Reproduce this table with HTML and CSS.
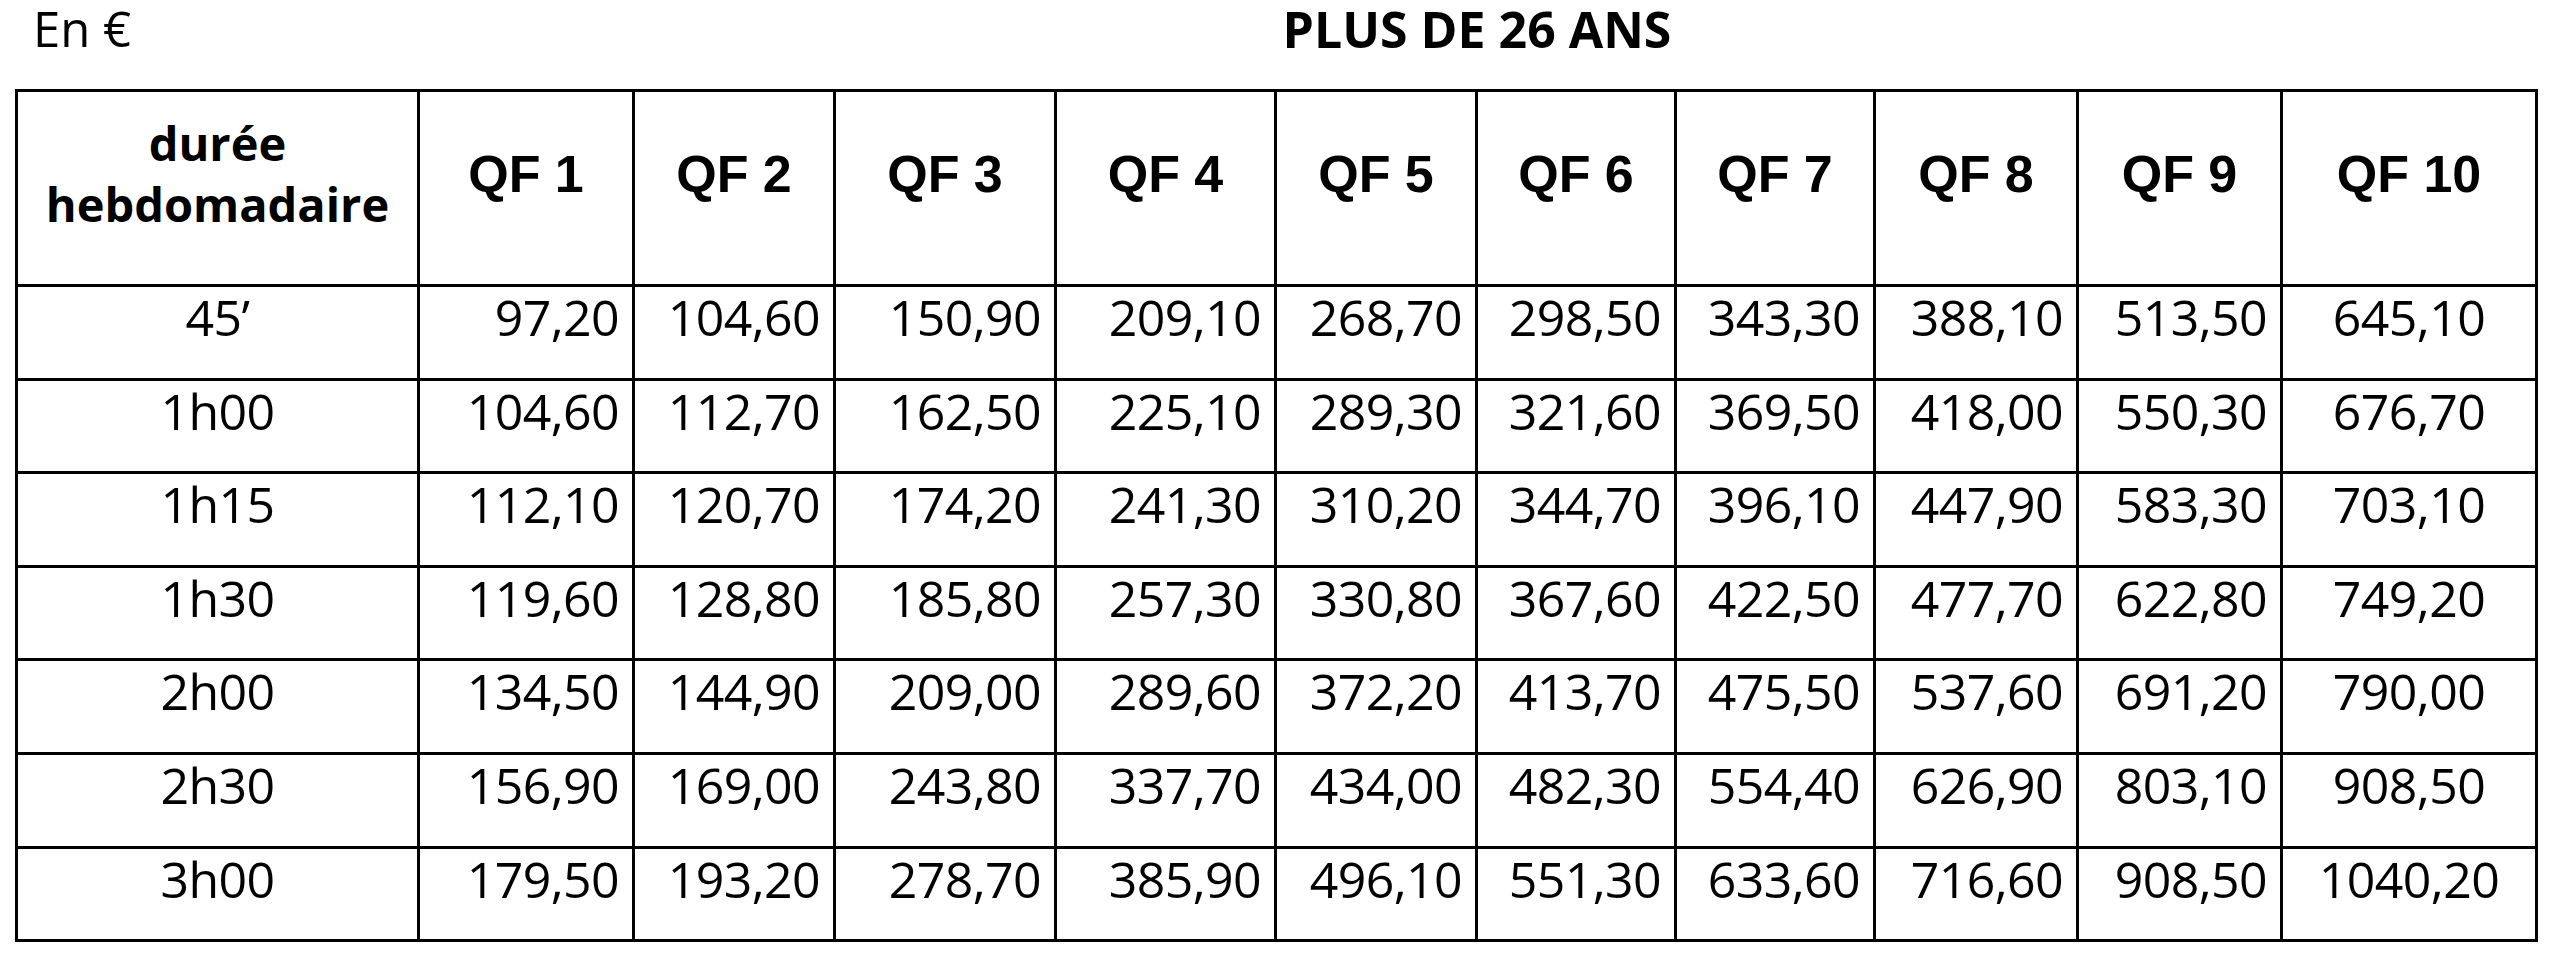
FILE: index.html
```html
<!DOCTYPE html>
<html lang="fr">
<head>
<meta charset="utf-8">
<title>Tarifs - Plus de 26 ans</title>
<link rel="stylesheet" href="styles.css">
</head>
<body>
<div class="top">
  <div class="unit">En €</div>
  <div class="title">PLUS DE 26 ANS</div>
</div>
<table class="tarifs">
  <colgroup>
    <col class="c0"><col class="c1"><col class="c2"><col class="c3"><col class="c4"><col class="c5"><col class="c6"><col class="c7"><col class="c8"><col class="c9"><col class="c10">
  </colgroup>
  <thead>
    <tr class="head">
      <th class="dur">durée<br>hebdomadaire</th>
      <th class="qf">QF 1</th><th class="qf">QF 2</th><th class="qf">QF 3</th><th class="qf">QF 4</th><th class="qf">QF 5</th><th class="qf">QF 6</th><th class="qf">QF 7</th><th class="qf">QF 8</th><th class="qf">QF 9</th><th class="qf">QF 10</th>
    </tr>
  </thead>
  <tbody>
    <tr><td class="d">45’</td><td>97,20</td><td>104,60</td><td>150,90</td><td>209,10</td><td>268,70</td><td>298,50</td><td>343,30</td><td>388,10</td><td>513,50</td><td class="last">645,10</td></tr>
    <tr><td class="d">1h00</td><td>104,60</td><td>112,70</td><td>162,50</td><td>225,10</td><td>289,30</td><td>321,60</td><td>369,50</td><td>418,00</td><td>550,30</td><td class="last">676,70</td></tr>
    <tr><td class="d">1h15</td><td>112,10</td><td>120,70</td><td>174,20</td><td>241,30</td><td>310,20</td><td>344,70</td><td>396,10</td><td>447,90</td><td>583,30</td><td class="last">703,10</td></tr>
    <tr><td class="d">1h30</td><td>119,60</td><td>128,80</td><td>185,80</td><td>257,30</td><td>330,80</td><td>367,60</td><td>422,50</td><td>477,70</td><td>622,80</td><td class="last">749,20</td></tr>
    <tr><td class="d">2h00</td><td>134,50</td><td>144,90</td><td>209,00</td><td>289,60</td><td>372,20</td><td>413,70</td><td>475,50</td><td>537,60</td><td>691,20</td><td class="last">790,00</td></tr>
    <tr><td class="d">2h30</td><td>156,90</td><td>169,00</td><td>243,80</td><td>337,70</td><td>434,00</td><td>482,30</td><td>554,40</td><td>626,90</td><td>803,10</td><td class="last">908,50</td></tr>
    <tr><td class="d">3h00</td><td>179,50</td><td>193,20</td><td>278,70</td><td>385,90</td><td>496,10</td><td>551,30</td><td>633,60</td><td>716,60</td><td>908,50</td><td class="last">1040,20</td></tr>
  </tbody>
</table>
</body>
</html>
```
FILE: styles.css
```css
html, body {
  margin: 0;
  padding: 0;
  background: #ffffff;
  color: #000000;
}

body {
  font-family: "Open Sans", "Noto Sans", sans-serif;
}

.top {
  display: flex;
  align-items: flex-start;
  height: 89px;
  padding: 4px 0 0 16px;
  box-sizing: border-box;
}

.unit {
  width: 402px;
  padding-left: 17px;
  box-sizing: border-box;
  font-size: 49px;
  line-height: 49px;
  font-weight: 400;
}

.title {
  width: 2118px;
  text-align: center;
  font-size: 50px;
  line-height: 50px;
  font-weight: 700;
}

.tarifs {
  margin-left: 15px;
  width: 2523px;
  table-layout: fixed;
  border-collapse: collapse;
}

.c0 { width: 402px; }
.c1 { width: 215px; }
.c2 { width: 201px; }
.c3 { width: 221px; }
.c4 { width: 220px; }
.c5 { width: 201px; }
.c6 { width: 199px; }
.c7 { width: 199px; }
.c8 { width: 203px; }
.c9 { width: 204px; }
.c10 { width: 255px; }

.tarifs th,
.tarifs td {
  border: 3px solid #000000;
  padding: 0;
}

.head {
  height: 195px;
}

.head th {
  vertical-align: middle;
  text-align: center;
  padding-bottom: 28px;
}

.dur {
  font-family: "Open Sans", "Noto Sans", sans-serif;
  font-weight: 700;
  font-size: 47px;
  line-height: 61px;
}

.qf {
  font-family: "Liberation Sans", Arial, sans-serif;
  font-weight: 700;
  font-size: 52px;
  line-height: 52px;
}

.tarifs tbody tr {
  height: 93.6px;
}

.tarifs td {
  vertical-align: top;
  text-align: right;
  font-size: 50px;
  line-height: 50px;
  letter-spacing: -0.6px;
  padding: 5px 13px 0 0;
  white-space: nowrap;
}

.tarifs td.d {
  text-align: center;
  padding-right: 0;
}

.tarifs td.last {
  text-align: center;
  padding-right: 0;
}
```
